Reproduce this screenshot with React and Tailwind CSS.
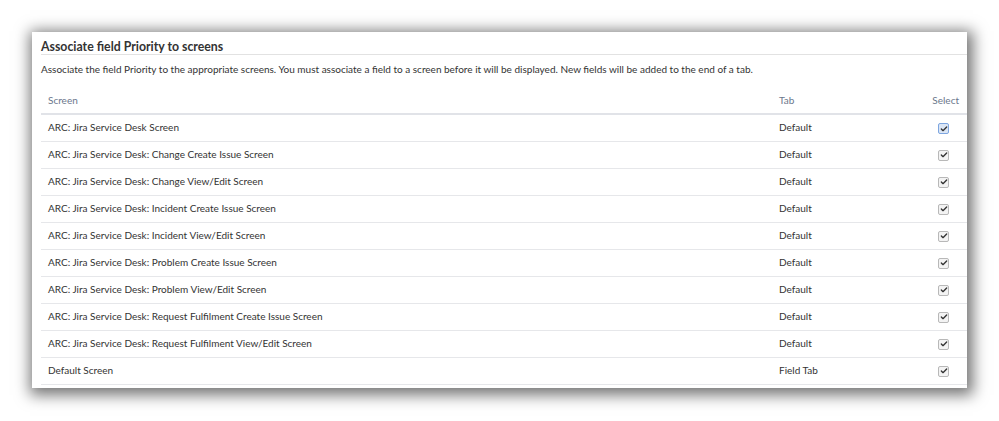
import { Check } from 'lucide-react';

const ROWS = [
  { screen: 'ARC: Jira Service Desk Screen', tab: 'Default', focused: true },
  { screen: 'ARC: Jira Service Desk: Change Create Issue Screen', tab: 'Default' },
  { screen: 'ARC: Jira Service Desk: Change View/Edit Screen', tab: 'Default' },
  { screen: 'ARC: Jira Service Desk: Incident Create Issue Screen', tab: 'Default' },
  { screen: 'ARC: Jira Service Desk: Incident View/Edit Screen', tab: 'Default' },
  { screen: 'ARC: Jira Service Desk: Problem Create Issue Screen', tab: 'Default' },
  { screen: 'ARC: Jira Service Desk: Problem View/Edit Screen', tab: 'Default' },
  { screen: 'ARC: Jira Service Desk: Request Fulfilment Create Issue Screen', tab: 'Default' },
  { screen: 'ARC: Jira Service Desk: Request Fulfilment View/Edit Screen', tab: 'Default' },
  { screen: 'Default Screen', tab: 'Field Tab' },
];

function Box({ focused }) {
  return (
    <span
      className={
        'inline-flex w-[11px] h-[11px] items-center justify-center rounded-[2px] border align-middle ' +
        (focused ? 'border-[#7ea6e0] bg-[#dbe6f5]' : 'border-[#b8b8b8] bg-[#f3f3f3]')
      }
    >
      <Check size={8} strokeWidth={4} className="text-[#333]" />
    </span>
  );
}

export default function App() {
  return (
    <div className="w-[999px] h-[421px] bg-white pt-[32px] pl-[32px] font-['Lato',sans-serif]">
      <div className="w-[935px] h-[356px] bg-white pl-[9px] shadow-[2px_3px_14px_4px_rgba(0,0,0,0.55)]">
        <h2 className="pt-[7px] h-[23px] text-[12.3px] leading-[15px] font-bold text-[#333] border-b border-[#e2e2e2]">
          Associate field Priority to screens
        </h2>
        <p className="mt-[7px] text-[10px] leading-[14px] text-[#333]">
          Associate the field Priority to the appropriate screens. You must associate a field to a screen before it will be displayed. New fields will be added to the end of a tab.
        </p>
        <table className="mt-[12px] w-full border-collapse text-[10px] text-[#333]">
          <thead>
            <tr className="h-[26px] border-b-2 border-[#e1e3e8] text-[#6b778c]">
              <th className="pl-[7px] text-left font-normal">Screen</th>
              <th className="w-[128px] text-left font-normal">Tab</th>
              <th className="w-[60px] pr-[8px] text-right font-normal">Select</th>
            </tr>
          </thead>
          <tbody>
            {ROWS.map(r => (
              <tr key={r.screen} className="h-[27px] border-b border-[#e6e7ea]">
                <td className="pl-[7px]">{r.screen}</td>
                <td>{r.tab}</td>
                <td className="pr-[18px] text-right">
                  <Box focused={r.focused} />
                </td>
              </tr>
            ))}
          </tbody>
        </table>
      </div>
    </div>
  );
}
